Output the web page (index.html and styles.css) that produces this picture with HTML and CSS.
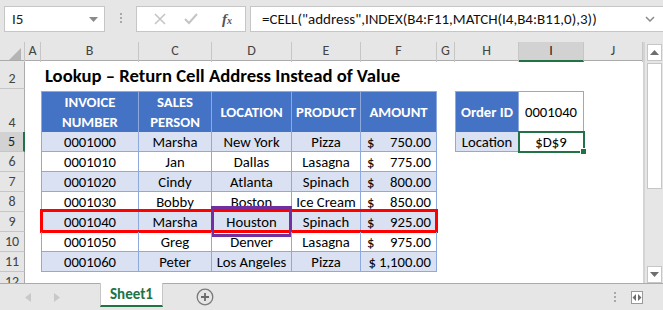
FILE: index.html
```html
<!DOCTYPE html>
<html lang="en">
<head>
    <meta charset="UTF-8" />
    <title>Lookup - Return Cell Address</title>
    <link rel="stylesheet" href="styles.css">
</head>
<body>

    <!-- Formula bar -->
    <div class="formula-bar">
        <div class="name-box">
            <span>I5</span>
            <svg class="caret" width="9" height="5" viewBox="0 0 9 5"><path d="M0 0h9L4.5 5z" fill="#8a8a8a" /></svg>
        </div>
        <div class="grip"><i></i><i></i><i></i></div>
        <div class="fx-box">
            <svg width="12" height="12" viewBox="0 0 12 12"><path d="M1 1l10 10M11 1L1 11" stroke="#c4c4c4" stroke-width="1.5" /></svg>
            <svg width="14" height="12" viewBox="0 0 14 12"><path d="M1 6l4 4 8-9" stroke="#c4c4c4" stroke-width="2" fill="none" /></svg>
            <span class="fx">f<sub>x</sub></span>
        </div>
        <div class="formula">
            <span>=CELL("address",INDEX(B4:F11,MATCH(I4,B4:B11,0),3))</span>
            <svg width="10" height="6" viewBox="0 0 10 6"><path d="M1 1l4 4 4-4" stroke="#8a8a8a" stroke-width="1.5" fill="none" /></svg>
        </div>
    </div>

    <!-- Sheet -->
    <div class="sheet-wrap">
        <div class="sheet">
            <div class="row col-head">
                <div class="corner"><span></span></div>
                <div>A</div><div>B</div><div>C</div><div>D</div><div>E</div>
                <div>F</div><div>G</div><div>H</div><div class="sel">I</div><div>J</div>
            </div>

            <div class="row r2">
                <div class="num">2</div>
                <div class="title">Lookup – Return Cell Address Instead of Value</div>
            </div>
            <div class="row r3"><div class="num"></div></div>

            <div class="row r4">
                <div class="num">4</div>
                <div class="cell head b first">INVOICE<br>NUMBER</div>
                <div class="cell head c">SALES<br>PERSON</div>
                <div class="cell head d">LOCATION</div>
                <div class="cell head e">PRODUCT</div>
                <div class="cell head f">AMOUNT</div>
                <div class="cell head h first">Order ID</div>
                <div class="cell plain i">0001040</div>
            </div>

            <div class="row data band">
                <div class="num sel">5</div>
                <div class="cell b first">0001000</div>
                <div class="cell c">Marsha</div>
                <div class="cell d">New York</div>
                <div class="cell e">Pizza</div>
                <div class="cell f money"><span>$</span><span>750.00</span></div>
                <div class="cell h first">Location</div>
                <div class="cell plain i active">$D$9<span class="handle"></span></div>
            </div>
            <div class="row data">
                <div class="num">6</div>
                <div class="cell b first">0001010</div>
                <div class="cell c">Jan</div>
                <div class="cell d">Dallas</div>
                <div class="cell e">Lasagna</div>
                <div class="cell f money"><span>$</span><span>775.00</span></div>
            </div>
            <div class="row data band">
                <div class="num">7</div>
                <div class="cell b first">0001020</div>
                <div class="cell c">Cindy</div>
                <div class="cell d">Atlanta</div>
                <div class="cell e">Spinach</div>
                <div class="cell f money"><span>$</span><span>800.00</span></div>
            </div>
            <div class="row data">
                <div class="num">8</div>
                <div class="cell b first">0001030</div>
                <div class="cell c">Bobby</div>
                <div class="cell d">Boston</div>
                <div class="cell e">Ice Cream</div>
                <div class="cell f money"><span>$</span><span>850.00</span></div>
            </div>
            <div class="row data band">
                <div class="num">9</div>
                <div class="cell b first">0001040</div>
                <div class="cell c">Marsha</div>
                <div class="cell d">Houston</div>
                <div class="cell e">Spinach</div>
                <div class="cell f money"><span>$</span><span>925.00</span></div>
                <div class="mark-row"></div>
                <div class="mark-cell"></div>
            </div>
            <div class="row data">
                <div class="num">10</div>
                <div class="cell b first">0001050</div>
                <div class="cell c">Greg</div>
                <div class="cell d">Denver</div>
                <div class="cell e">Lasagna</div>
                <div class="cell f money"><span>$</span><span>975.00</span></div>
            </div>
            <div class="row data band">
                <div class="num">11</div>
                <div class="cell b first">0001060</div>
                <div class="cell c">Peter</div>
                <div class="cell d">Los Angeles</div>
                <div class="cell e">Pizza</div>
                <div class="cell f money tight"><span>$</span><span>1,100.00</span></div>
            </div>
            <div class="row r12"><div class="num">12</div></div>
        </div>

        <div class="vscroll">
            <div class="arrow"><svg width="9" height="5" viewBox="0 0 9 5"><path d="M0 5h9L4.5 0z" fill="#6e6e6e" /></svg></div>
            <div class="thumb"></div>
            <div class="track"></div>
            <div class="arrow"><svg width="9" height="5" viewBox="0 0 9 5"><path d="M0 0h9L4.5 5z" fill="#6e6e6e" /></svg></div>
        </div>
    </div>

    <!-- Sheet tabs -->
    <div class="tabs">
        <div class="nav">
            <svg width="6" height="9" viewBox="0 0 6 9"><path d="M6 0v9L0 4.5z" fill="#c8c8c8" /></svg>
            <svg width="6" height="9" viewBox="0 0 6 9"><path d="M0 0v9l6-4.5z" fill="#c8c8c8" /></svg>
        </div>
        <div class="tab">Sheet1</div>
        <svg class="add" width="18" height="18" viewBox="0 0 18 18">
            <circle cx="9" cy="9" r="7.8" stroke="#7a7a7a" stroke-width="1.3" fill="none" />
            <path d="M9 5v8M5 9h8" stroke="#6a6a6a" stroke-width="1.8" />
        </svg>
        <div class="spacer"></div>
        <div class="grip"><i></i><i></i><i></i></div>
        <svg class="split" width="12" height="13" viewBox="0 0 12 13">
            <rect x="0.5" y="0.5" width="11" height="12" fill="#fff" stroke="#9a9a9a" />
            <path d="M5 3v7L1.5 6.5zM7 3v7l3.5-3.5z" fill="#6e6e6e" />
        </svg>
    </div>

</body>
</html>
```

FILE: styles.css
```css
body {
    margin: 0;
    width: 663px;
    height: 310px;
    overflow: hidden;
    background-color: #e6e6e6;
    font-family: Carlito, Calibri, "Liberation Sans", sans-serif;
    color: #000;
}

/* formula bar */
.formula-bar {
    height: 42px;
    display: flex;
    align-items: flex-start;
    padding: 6px 0 0 4px;
    box-sizing: border-box;
}

.name-box {
    width: 101px;
    height: 26px;
    box-sizing: border-box;
    background: white;
    border: 1px solid #c6c6c6;
    display: flex;
    align-items: center;
    justify-content: space-between;
    padding: 0 6px 0 7px;
    font-size: 15px;
    color: #222;
}

.grip {
    display: flex;
    flex-direction: column;
    gap: 2px;
    width: 31px;
    align-items: center;
    padding-top: 7px;
}

    .grip i {
        width: 2px;
        height: 2px;
        background: #a8a8a8;
    }

.fx-box {
    width: 110px;
    height: 26px;
    box-sizing: border-box;
    background: white;
    border: 1px solid #c6c6c6;
    display: flex;
    align-items: center;
    justify-content: space-around;
    padding: 0 4px 0 8px;
}

.fx {
    font-family: "Liberation Serif", serif;
    font-style: italic;
    font-weight: bold;
    font-size: 15px;
    color: #555;
    margin-left: 6px;
}

    .fx sub {
        font-size: 10px;
        vertical-align: 0;
    }

.formula {
    flex: 1;
    height: 26px;
    margin-left: 4px;
    box-sizing: border-box;
    background: white;
    border: 1px solid #c6c6c6;
    border-right: none;
    display: flex;
    align-items: center;
    justify-content: space-between;
    padding: 0 8px 0 11px;
    font-size: 15px;
    color: #111;
}

/* sheet grid */
.sheet-wrap {
    display: flex;
    height: 241px;
}

.sheet {
    width: 643px;
    background: white;
    border-right: 2px solid #d4d4d4;
    position: relative;
    overflow: hidden;
}

.row {
    display: grid;
    grid-template-columns: 25px 16px 98px 73px 80px 69px 76px 18px 64px 65px 59px;
    font-size: 14.7px;
}

.col-head {
    height: 19px;
    background: #e6e6e6;
    border-bottom: 1px solid #ababab;
    box-sizing: border-box;
    color: #444;
    font-size: 14px;
}

    .col-head div {
        border-right: 1px solid #c6c6c6;
        text-align: center;
        line-height: 18px;
    }

    .col-head .sel {
        background: #d2d2d2;
        border-bottom: 2px solid #217346;
        color: #222;
    }

.corner {
    position: relative;
}

    .corner span {
        position: absolute;
        right: 3px;
        bottom: 2px;
        border-left: 12px solid transparent;
        border-bottom: 12px solid #b4b4b4;
    }

.num {
    grid-column: 1;
    background: #e6e6e6;
    border-right: 1px solid #ababab;
    border-bottom: 1px solid #c6c6c6;
    color: #444;
    font-size: 14px;
    display: flex;
    align-items: flex-end;
    justify-content: center;
    padding-bottom: 1px;
    box-sizing: border-box;
}

    .num.sel {
        background: #d2d2d2;
        border-right: 2px solid #217346;
        color: #222;
    }

.r2 {
    height: 28px;
}

.title {
    grid-column: 3 / 10;
    font-weight: bold;
    font-size: 18.7px;
    padding: 0 0 2px 4px;
    align-self: end;
    white-space: nowrap;
}

.r3 {
    height: 2px;
}

    .r3 .num {
        border-bottom: none;
    }

.r4 {
    height: 41px;
}

.data {
    height: 20px;
    position: relative;
}

.r12 {
    height: 20px;
}

/* table cells */
.cell {
    border-right: 1px solid #8ea9db;
    border-bottom: 1px solid #8ea9db;
    box-sizing: border-box;
    display: flex;
    align-items: center;
    justify-content: center;
    white-space: nowrap;
}

    .cell.first {
        border-left: 1px solid #8ea9db;
    }

.r4 .cell {
    border-top: 1px solid #8ea9db;
    line-height: 20px;
    text-align: center;
}

.head {
    background: #4472c4;
    color: white;
    font-weight: bold;
}

.band .cell {
    background: #d9e1f2;
}

    .band .cell.plain,
    .cell.plain {
        background: white;
    }

.b { grid-column: 3; }
.c { grid-column: 4; }
.d { grid-column: 5; }
.e { grid-column: 6; }
.f { grid-column: 7; }
.h { grid-column: 9; }
.i { grid-column: 10; }

.money {
    justify-content: space-between;
    padding: 0 5px 0 6px;
}

    .money.tight {
        justify-content: flex-end;
        gap: 3px;
    }

.active {
    position: relative;
    outline: 2px solid #217346;
    outline-offset: -1px;
}

.handle {
    position: absolute;
    right: -4px;
    bottom: -4px;
    width: 5px;
    height: 5px;
    background: #217346;
    border: 1px solid white;
}

/* highlight boxes */
.mark-row {
    position: absolute;
    left: 40px;
    top: -3px;
    width: 398px;
    height: 24px;
    border: 3px solid #ff0000;
    box-sizing: border-box;
}

.mark-cell {
    position: absolute;
    left: 211px;
    top: -6px;
    width: 81px;
    height: 31px;
    border: 3px solid #7030a0;
    box-sizing: border-box;
}

/* vertical scrollbar */
.vscroll {
    width: 18px;
    display: flex;
    flex-direction: column;
    padding: 2px 1px 0 2px;
    box-sizing: border-box;
    background: #e6e6e6;
}

    .vscroll .arrow {
        height: 15px;
        background: white;
        border: 1px solid #c6c6c6;
        display: flex;
        align-items: center;
        justify-content: center;
    }

    .vscroll .thumb {
        height: 124px;
        margin-top: 2px;
        background: white;
        border: 1px solid #c6c6c6;
    }

    .vscroll .track {
        flex: 1;
    }

/* tabs bar */
.tabs {
    height: 27px;
    border-top: 1px solid #ababab;
    box-sizing: border-box;
    display: flex;
    align-items: flex-start;
}

.nav {
    width: 100px;
    display: flex;
    gap: 23px;
    padding: 9px 0 0 25px;
    box-sizing: border-box;
}

.tab {
    width: 63px;
    height: 24px;
    margin-top: -1px;
    box-sizing: border-box;
    background: white;
    border-left: 1px solid #c6c6c6;
    border-right: 1px solid #c6c6c6;
    border-bottom: 2px solid #217346;
    color: #217346;
    font-weight: bold;
    font-size: 15px;
    text-align: center;
    line-height: 23px;
}

.add {
    margin: 4px 0 0 33px;
}

.spacer {
    flex: 1;
}

.tabs .grip {
    width: 8px;
    padding-top: 8px;
    margin-right: 12px;
}

.split {
    margin: 7px 20px 0 0;
}
```
